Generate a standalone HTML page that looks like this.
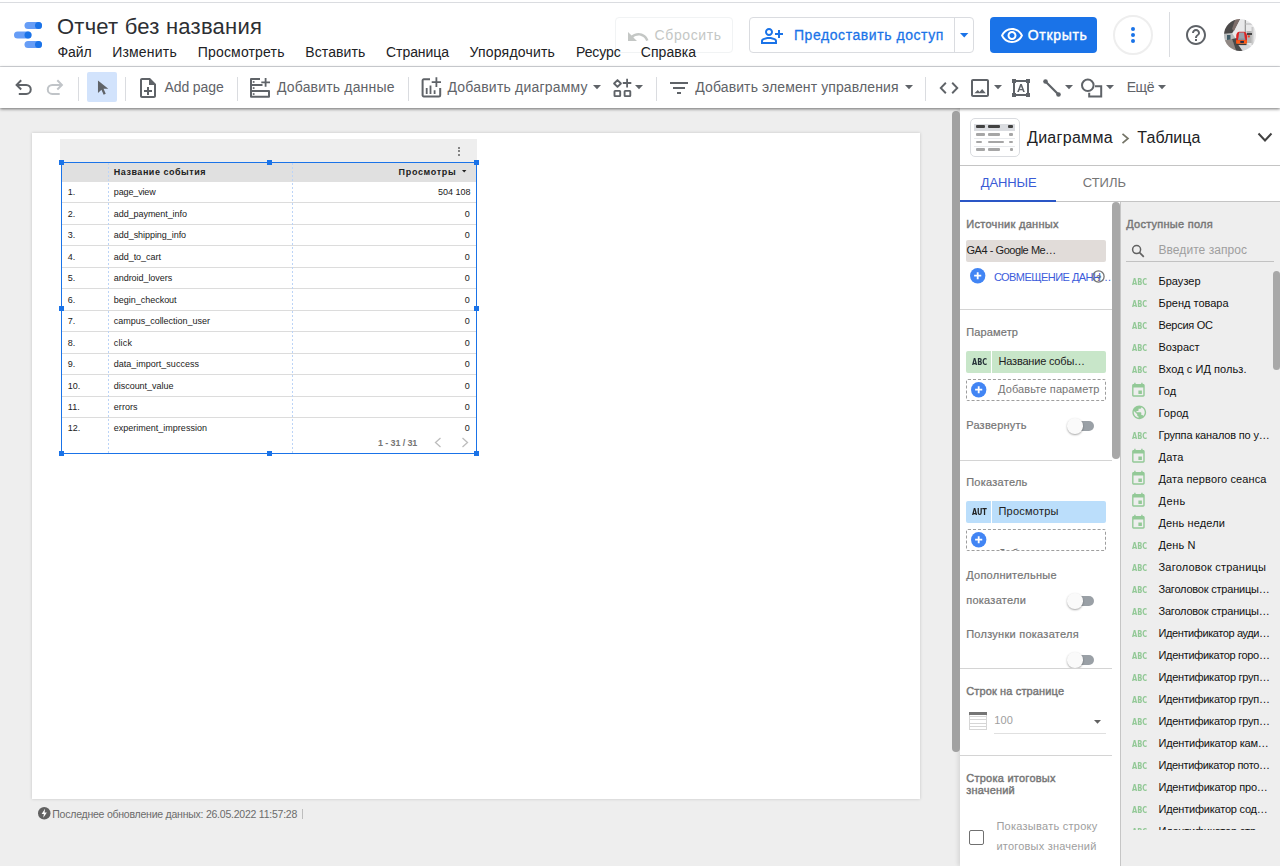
<!DOCTYPE html>
<html lang="ru"><head><meta charset="utf-8"><title>Отчет без названия</title>
<style>
html,body{margin:0;padding:0;}
body{width:1280px;height:866px;position:relative;overflow:hidden;background:#eeeeee;font-family:"Liberation Sans", sans-serif;}
.t{position:absolute;white-space:nowrap;display:block;}
.b{position:absolute;box-sizing:border-box;}
svg{position:absolute;overflow:visible;}
</style></head><body>
<div class="b" style="left:32px;top:133px;width:887.5px;height:665.5px;background:#fff;box-shadow:0 0 3px rgba(0,0,0,.18);"></div>
<div class="b" style="left:60px;top:139px;width:416.5px;height:23px;background:#eeeeee;"></div>
<div class="b" style="left:457.8px;top:146.5px;width:2px;height:2px;background:#616161;border-radius:50%;"></div>
<div class="b" style="left:457.8px;top:150px;width:2px;height:2px;background:#616161;border-radius:50%;"></div>
<div class="b" style="left:457.8px;top:153.5px;width:2px;height:2px;background:#616161;border-radius:50%;"></div>
<div class="b" style="left:61px;top:162px;width:416px;height:20px;background:#e0e0e0;"></div>
<span id="t0" class="t" style="left:113.80px;top:168.00px;font-size:9px;line-height:9px;color:#212121;font-weight:700;letter-spacing:0.516px;">Название события</span>
<span id="t1" class="t" style="left:398.60px;top:168.00px;font-size:9px;line-height:9px;color:#212121;font-weight:700;letter-spacing:0.659px;">Просмотры</span>
<svg style="left:462px;top:170.400px" width="4.400" height="2.400" viewBox="0 0 4.400 2.400"><path fill="#212121" d="M0 0h4.400L2.200 2.400z"/></svg>
<span id="t2" class="t" style="left:67.80px;top:188.00px;font-size:9px;line-height:9px;color:#212121;">1.</span>
<span id="t3" class="t" style="left:113.80px;top:188.00px;font-size:9px;line-height:9px;color:#212121;letter-spacing:-0.137px;">page_view</span>
<span id="t4" class="t" style="left:438.00px;top:188.00px;font-size:9px;line-height:9px;color:#212121;letter-spacing:0.008px;">504 108</span>
<div class="b" style="left:61px;top:202.3px;width:416px;height:1px;background:#dcdcdc;"></div>
<span id="t5" class="t" style="left:67.80px;top:210.00px;font-size:9px;line-height:9px;color:#212121;">2.</span>
<span id="t6" class="t" style="left:113.80px;top:210.00px;font-size:9px;line-height:9px;color:#212121;letter-spacing:-0.060px;">add_payment_info</span>
<span id="t7" class="t" style="left:464.80px;top:210.00px;font-size:9px;line-height:9px;color:#212121;letter-spacing:0.784px;">0</span>
<div class="b" style="left:61px;top:223.77px;width:416px;height:1px;background:#dcdcdc;"></div>
<span id="t8" class="t" style="left:67.80px;top:231.00px;font-size:9px;line-height:9px;color:#212121;">3.</span>
<span id="t9" class="t" style="left:113.80px;top:231.00px;font-size:9px;line-height:9px;color:#212121;letter-spacing:-0.046px;">add_shipping_info</span>
<span id="t10" class="t" style="left:464.80px;top:231.00px;font-size:9px;line-height:9px;color:#212121;letter-spacing:0.784px;">0</span>
<div class="b" style="left:61px;top:245.24px;width:416px;height:1px;background:#dcdcdc;"></div>
<span id="t11" class="t" style="left:67.80px;top:253.00px;font-size:9px;line-height:9px;color:#212121;">4.</span>
<span id="t12" class="t" style="left:113.80px;top:253.00px;font-size:9px;line-height:9px;color:#212121;letter-spacing:-0.041px;">add_to_cart</span>
<span id="t13" class="t" style="left:464.80px;top:253.00px;font-size:9px;line-height:9px;color:#212121;letter-spacing:0.784px;">0</span>
<div class="b" style="left:61px;top:266.71px;width:416px;height:1px;background:#dcdcdc;"></div>
<span id="t14" class="t" style="left:67.80px;top:274.00px;font-size:9px;line-height:9px;color:#212121;">5.</span>
<span id="t15" class="t" style="left:113.80px;top:274.00px;font-size:9px;line-height:9px;color:#212121;letter-spacing:-0.053px;">android_lovers</span>
<span id="t16" class="t" style="left:464.80px;top:274.00px;font-size:9px;line-height:9px;color:#212121;letter-spacing:0.784px;">0</span>
<div class="b" style="left:61px;top:288.18px;width:416px;height:1px;background:#dcdcdc;"></div>
<span id="t17" class="t" style="left:67.80px;top:296.00px;font-size:9px;line-height:9px;color:#212121;">6.</span>
<span id="t18" class="t" style="left:113.80px;top:296.00px;font-size:9px;line-height:9px;color:#212121;letter-spacing:-0.019px;">begin_checkout</span>
<span id="t19" class="t" style="left:464.80px;top:296.00px;font-size:9px;line-height:9px;color:#212121;letter-spacing:0.784px;">0</span>
<div class="b" style="left:61px;top:309.65px;width:416px;height:1px;background:#dcdcdc;"></div>
<span id="t20" class="t" style="left:67.80px;top:317.00px;font-size:9px;line-height:9px;color:#212121;">7.</span>
<span id="t21" class="t" style="left:113.80px;top:317.00px;font-size:9px;line-height:9px;color:#212121;letter-spacing:-0.021px;">campus_collection_user</span>
<span id="t22" class="t" style="left:464.80px;top:317.00px;font-size:9px;line-height:9px;color:#212121;letter-spacing:0.784px;">0</span>
<div class="b" style="left:61px;top:331.12px;width:416px;height:1px;background:#dcdcdc;"></div>
<span id="t23" class="t" style="left:67.80px;top:339.00px;font-size:9px;line-height:9px;color:#212121;">8.</span>
<span id="t24" class="t" style="left:113.80px;top:339.00px;font-size:9px;line-height:9px;color:#212121;letter-spacing:0.160px;">click</span>
<span id="t25" class="t" style="left:464.80px;top:339.00px;font-size:9px;line-height:9px;color:#212121;letter-spacing:0.784px;">0</span>
<div class="b" style="left:61px;top:352.59px;width:416px;height:1px;background:#dcdcdc;"></div>
<span id="t26" class="t" style="left:67.80px;top:360.00px;font-size:9px;line-height:9px;color:#212121;">9.</span>
<span id="t27" class="t" style="left:113.80px;top:360.00px;font-size:9px;line-height:9px;color:#212121;letter-spacing:0.003px;">data_import_success</span>
<span id="t28" class="t" style="left:464.80px;top:360.00px;font-size:9px;line-height:9px;color:#212121;letter-spacing:0.784px;">0</span>
<div class="b" style="left:61px;top:374.06px;width:416px;height:1px;background:#dcdcdc;"></div>
<span id="t29" class="t" style="left:67.80px;top:382.00px;font-size:9px;line-height:9px;color:#212121;">10.</span>
<span id="t30" class="t" style="left:113.80px;top:382.00px;font-size:9px;line-height:9px;color:#212121;letter-spacing:-0.032px;">discount_value</span>
<span id="t31" class="t" style="left:464.80px;top:382.00px;font-size:9px;line-height:9px;color:#212121;letter-spacing:0.784px;">0</span>
<div class="b" style="left:61px;top:395.53px;width:416px;height:1px;background:#dcdcdc;"></div>
<span id="t32" class="t" style="left:67.80px;top:403.00px;font-size:9px;line-height:9px;color:#212121;">11.</span>
<span id="t33" class="t" style="left:113.80px;top:403.00px;font-size:9px;line-height:9px;color:#212121;letter-spacing:0.047px;">errors</span>
<span id="t34" class="t" style="left:464.80px;top:403.00px;font-size:9px;line-height:9px;color:#212121;letter-spacing:0.784px;">0</span>
<div class="b" style="left:61px;top:417.0px;width:416px;height:1px;background:#dcdcdc;"></div>
<span id="t35" class="t" style="left:67.80px;top:424.00px;font-size:9px;line-height:9px;color:#212121;">12.</span>
<span id="t36" class="t" style="left:113.80px;top:424.00px;font-size:9px;line-height:9px;color:#212121;letter-spacing:0.003px;">experiment_impression</span>
<span id="t37" class="t" style="left:464.80px;top:424.00px;font-size:9px;line-height:9px;color:#212121;letter-spacing:0.784px;">0</span>
<span id="t38" class="t" style="left:378.00px;top:439.00px;font-size:9px;line-height:9px;color:#757575;font-weight:700;letter-spacing:-0.121px;">1 - 31 / 31</span>
<svg style="left:434px;top:437px" width="8" height="11" viewBox="0 0 8 11"><path d="M6.500 1L1.500 5.500l5 4.500" fill="none" stroke="#bdbdbd" stroke-width="1.300"/></svg>
<svg style="left:460.500px;top:437px" width="8" height="11" viewBox="0 0 8 11"><path d="M1.500 1l5 4.500-5 4.500" fill="none" stroke="#bdbdbd" stroke-width="1.300"/></svg>
<div class="b" style="left:107.6px;top:163px;width:1px;height:290px;background:repeating-linear-gradient(#bcd4f7 0,#bcd4f7 2px,transparent 2px,transparent 4px);"></div>
<div class="b" style="left:291.6px;top:163px;width:1px;height:290px;background:repeating-linear-gradient(#bcd4f7 0,#bcd4f7 2px,transparent 2px,transparent 4px);"></div>
<div class="b" style="left:61px;top:162px;width:416px;height:292px;border:1px solid #1a73e8;"></div>
<div class="b" style="left:58.8px;top:160.2px;width:5.2px;height:5.2px;background:#1a73e8;"></div>
<div class="b" style="left:58.8px;top:306.2px;width:5.2px;height:5.2px;background:#1a73e8;"></div>
<div class="b" style="left:58.8px;top:450.9px;width:5.2px;height:5.2px;background:#1a73e8;"></div>
<div class="b" style="left:266.8px;top:160.2px;width:5.2px;height:5.2px;background:#1a73e8;"></div>
<div class="b" style="left:266.8px;top:450.9px;width:5.2px;height:5.2px;background:#1a73e8;"></div>
<div class="b" style="left:474.3px;top:160.2px;width:5.2px;height:5.2px;background:#1a73e8;"></div>
<div class="b" style="left:474.3px;top:306.2px;width:5.2px;height:5.2px;background:#1a73e8;"></div>
<div class="b" style="left:474.3px;top:450.9px;width:5.2px;height:5.2px;background:#1a73e8;"></div>
<svg style="left:37.500px;top:806.800px" width="12.500" height="12.500" viewBox="0 0 24 24"><circle cx="12" cy="12" r="12" fill="#616161"/><path fill="#fff" d="M13.500 3.500L7 13.500h4.200l-1 7 6.800-10h-4.300z"/></svg>
<span id="t39" class="t" style="left:52.30px;top:809.00px;font-size:10.5px;line-height:10.5px;color:#6b6b6b;letter-spacing:-0.231px;">Последнее обновление данных: 26.05.2022 11:57:28</span>
<div class="b" style="left:302px;top:808.5px;width:1px;height:10.5px;background:#bdbdbd;"></div>
<div class="b" style="left:960px;top:108px;width:320px;height:758px;background:#fff;box-shadow:-2px 0 4px rgba(0,0,0,.10);"></div>
<div class="b" style="left:952px;top:111px;width:7.6px;height:641px;background:#a1a1a1;border-radius:4px;"></div>
<div class="b" style="left:970px;top:118px;width:50px;height:39px;border:1px solid #dadce0;border-radius:5px;background:#fff;"></div>
<div class="b" style="left:974px;top:123.5px;width:41px;height:7px;background:#dadce0;"></div>
<div class="b" style="left:976px;top:125.3px;width:9px;height:3px;background:#424242;border-radius:1px;"></div>
<div class="b" style="left:988px;top:125.3px;width:12px;height:3px;background:#424242;border-radius:1px;"></div>
<div class="b" style="left:1008px;top:125.3px;width:5px;height:3px;background:#424242;border-radius:1px;"></div>
<div class="b" style="left:976px;top:133px;width:9px;height:2.6px;background:#a6a6a6;border-radius:1px;"></div>
<div class="b" style="left:988px;top:133px;width:12px;height:2.6px;background:#a6a6a6;border-radius:1px;"></div>
<div class="b" style="left:1009px;top:133px;width:4px;height:2.6px;background:#a6a6a6;border-radius:1px;"></div>
<div class="b" style="left:976px;top:140.7px;width:6px;height:2.6px;background:#a6a6a6;border-radius:1px;"></div>
<div class="b" style="left:988px;top:140.7px;width:16px;height:2.6px;background:#a6a6a6;border-radius:1px;"></div>
<div class="b" style="left:1009px;top:140.7px;width:4px;height:2.6px;background:#a6a6a6;border-radius:1px;"></div>
<div class="b" style="left:976px;top:148.3px;width:9px;height:2.6px;background:#a6a6a6;border-radius:1px;"></div>
<div class="b" style="left:988px;top:148.3px;width:12px;height:2.6px;background:#a6a6a6;border-radius:1px;"></div>
<div class="b" style="left:1010px;top:148.3px;width:3px;height:2.6px;background:#a6a6a6;border-radius:1px;"></div>
<div class="b" style="left:974px;top:138px;width:41px;height:1px;background:#e8eaed;"></div>
<div class="b" style="left:974px;top:146px;width:41px;height:1px;background:#e8eaed;"></div>
<span id="t40" class="t" style="left:1027.00px;top:130.00px;font-size:16px;line-height:16px;color:#202124;letter-spacing:0.300px;">Диаграмма</span>
<svg style="left:1121px;top:132.500px" width="9" height="11" viewBox="0 0 9 11"><path d="M1.500 0.800L7 5.500l-5.500 4.700" fill="none" stroke="#757568" stroke-width="1.700"/></svg>
<span id="t41" class="t" style="left:1137.30px;top:130.00px;font-size:16px;line-height:16px;color:#202124;letter-spacing:0.067px;">Таблица</span>
<svg style="left:1257px;top:131.500px" width="16" height="11" viewBox="0 0 16 11"><path d="M1.500 1.500L8 8.500l6.500-7" fill="none" stroke="#424242" stroke-width="2"/></svg>
<div class="b" style="left:960px;top:165px;width:320px;height:1px;background:#c4c4c4;"></div>
<span id="t42" class="t" style="left:980.80px;top:176.00px;font-size:13px;line-height:13px;color:#3a5bd6;letter-spacing:-0.106px;">ДАННЫЕ</span>
<span id="t43" class="t" style="left:1082.80px;top:176.00px;font-size:13px;line-height:13px;color:#757575;letter-spacing:-0.042px;">СТИЛЬ</span>
<div class="b" style="left:960px;top:201px;width:320px;height:1px;background:#c4c4c4;"></div>
<div class="b" style="left:960px;top:200px;width:96px;height:2px;background:#2a56c6;"></div>
<span id="t44" class="t" style="left:966.20px;top:219.00px;font-size:11px;line-height:11px;color:#757575;-webkit-text-stroke:0.400px #757575;letter-spacing:0.306px;">Источник данных</span>
<div class="b" style="left:966px;top:240px;width:140px;height:21.6px;background:#e1dcd9;border-radius:2px;"></div>
<span id="t45" class="t" style="left:966.50px;top:245.00px;font-size:11px;line-height:11px;color:#212121;letter-spacing:-0.456px;">GA4 - Google Me…</span>
<svg style="left:969.9px;top:268.3px" width="15.4" height="15.4" viewBox="0 0 16 16"><circle cx="8" cy="8" r="8" fill="#4285f4"/><path d="M8 4.300v7.400M4.300 8h7.400" stroke="#fff" stroke-width="1.900"/></svg>
<span id="t46" class="t" style="left:993.90px;top:272.00px;font-size:11px;line-height:11px;color:#3b5bdb;letter-spacing:-0.542px;">СОВМЕЩЕНИЕ ДАНН…</span>
<svg style="left:1091.500px;top:270px" width="13" height="13" viewBox="0 0 13 13"><circle cx="6.500" cy="6.500" r="5.600" fill="none" stroke="#757575" stroke-width="1.300"/></svg>
<span id="t47" class="t" style="left:1096.00px;top:274.00px;font-size:9px;line-height:9px;color:#757575;font-weight:700;">?</span>
<div class="b" style="left:960px;top:309px;width:152px;height:1px;background:#d4d4d4;"></div>
<span id="t48" class="t" style="left:966.20px;top:327.00px;font-size:11px;line-height:11px;color:#757575;-webkit-text-stroke:0.200px #757575;letter-spacing:0.146px;">Параметр</span>
<div class="b" style="left:966px;top:351px;width:140px;height:22px;background:#c8e6c9;border-radius:2px;"></div>
<div class="b" style="left:991px;top:351px;width:1px;height:22px;background:#fff;"></div>
<span class="t" style="left:971.80px;top:357px;font:bold 9.500px/10px &quot;DejaVu Sans Condensed&quot;,&quot;DejaVu Sans&quot;,sans-serif;color:#263238;transform:scaleX(0.78);transform-origin:0 0;">ABC</span>
<span id="t49" class="t" style="left:998.50px;top:356.00px;font-size:11px;line-height:11px;color:#212121;letter-spacing:-0.198px;">Название собы…</span>
<div class="b" style="left:966px;top:379px;width:140px;height:22px;border:1px dashed #9e9e9e;border-radius:2px;"></div>
<svg style="left:971.3px;top:382.3px" width="15.4" height="15.4" viewBox="0 0 16 16"><circle cx="8" cy="8" r="8" fill="#4285f4"/><path d="M8 4.300v7.400M4.300 8h7.400" stroke="#fff" stroke-width="1.900"/></svg>
<span id="t50" class="t" style="left:998.00px;top:384.00px;font-size:11px;line-height:11px;color:#757575;letter-spacing:0.126px;">Добавьте параметр</span>
<span id="t51" class="t" style="left:966.20px;top:420.00px;font-size:11px;line-height:11px;color:#757575;-webkit-text-stroke:0.200px #757575;letter-spacing:0.229px;">Развернуть</span>
<div class="b" style="left:1077.2px;top:421px;width:17px;height:10px;background:#9aa0a6;border-radius:5px;"></div><div class="b" style="left:1067.4px;top:418.2px;width:15.600px;height:15.600px;background:#fafafa;border-radius:50%;box-shadow:0 1px 2px rgba(0,0,0,.35);"></div>
<div class="b" style="left:960px;top:459.5px;width:152px;height:1px;background:#d4d4d4;"></div>
<span id="t52" class="t" style="left:966.20px;top:477.00px;font-size:11px;line-height:11px;color:#757575;-webkit-text-stroke:0.200px #757575;letter-spacing:0.259px;">Показатель</span>
<div class="b" style="left:966px;top:501px;width:140px;height:22px;background:#bbdefb;border-radius:2px;"></div>
<div class="b" style="left:991px;top:501px;width:1px;height:22px;background:#fff;"></div>
<span class="t" style="left:971.80px;top:507px;font:bold 9.500px/10px &quot;DejaVu Sans Condensed&quot;,&quot;DejaVu Sans&quot;,sans-serif;color:#212121;transform:scaleX(0.78);transform-origin:0 0;">AUT</span>
<span id="t53" class="t" style="left:998.50px;top:506.00px;font-size:11px;line-height:11px;color:#212121;letter-spacing:0.216px;">Просмотры</span>
<div class="b" style="left:966px;top:529px;width:140px;height:22px;border:1px dashed #9e9e9e;border-radius:2px;"></div>
<svg style="left:971.3px;top:532.3px" width="15.4" height="15.4" viewBox="0 0 16 16"><circle cx="8" cy="8" r="8" fill="#4285f4"/><path d="M8 4.300v7.400M4.300 8h7.400" stroke="#fff" stroke-width="1.900"/></svg>
<div class="b" style="left:990px;top:540px;width:110px;height:10.400px;overflow:hidden;"><span class="t" style="left:8px;top:8.400px;font-size:11px;line-height:11px;color:#757575;">Добавьте показатель</span></div>
<span id="t54" class="t" style="left:966.20px;top:570.00px;font-size:11px;line-height:11px;color:#757575;-webkit-text-stroke:0.200px #757575;letter-spacing:0.252px;">Дополнительные</span>
<span id="t55" class="t" style="left:966.20px;top:595.00px;font-size:11px;line-height:11px;color:#757575;-webkit-text-stroke:0.200px #757575;letter-spacing:0.262px;">показатели</span>
<div class="b" style="left:1077.2px;top:596px;width:17px;height:10px;background:#9aa0a6;border-radius:5px;"></div><div class="b" style="left:1067.4px;top:593.2px;width:15.600px;height:15.600px;background:#fafafa;border-radius:50%;box-shadow:0 1px 2px rgba(0,0,0,.35);"></div>
<span id="t56" class="t" style="left:966.20px;top:629.00px;font-size:11px;line-height:11px;color:#757575;-webkit-text-stroke:0.200px #757575;letter-spacing:0.258px;">Ползунки показателя</span>
<div class="b" style="left:1060px;top:645px;width:50px;height:23px;overflow:hidden;"><div class="b" style="left:17.2px;top:10.2px;width:17px;height:10px;background:#9aa0a6;border-radius:5px;"></div><div class="b" style="left:7.3999999999999995px;top:7.3999999999999995px;width:15.600px;height:15.600px;background:#fafafa;border-radius:50%;box-shadow:0 1px 2px rgba(0,0,0,.35);"></div></div>
<div class="b" style="left:960px;top:668px;width:152px;height:1px;background:#d4d4d4;"></div>
<span id="t57" class="t" style="left:966.20px;top:686.00px;font-size:11px;line-height:11px;color:#757575;-webkit-text-stroke:0.400px #757575;letter-spacing:0.140px;">Строк на странице</span>
<div class="b" style="left:969px;top:712px;width:18px;height:18px;border:1px solid #d6d6d6;border-top:none;background:repeating-linear-gradient(#fff 0,#fff 2.200px,#d6d6d6 2.200px,#d6d6d6 3.200px);background-position:0 2px;"></div>
<div class="b" style="left:969px;top:712px;width:18px;height:2.7px;background:#757575;"></div>
<span id="t58" class="t" style="left:994.30px;top:715.00px;font-size:11px;line-height:11px;color:#9e9e9e;letter-spacing:0.047px;">100</span>
<svg style="left:1093.5px;top:719.5px" width="7" height="3.7" viewBox="0 0 7 3.7"><path fill="#616161" d="M0 0h7L3.5 3.7z"/></svg>
<div class="b" style="left:994px;top:733px;width:112px;height:1px;background:#e0e0e0;"></div>
<div class="b" style="left:960px;top:755px;width:152px;height:1px;background:#d4d4d4;"></div>
<span id="t59" class="t" style="left:966.20px;top:773.00px;font-size:11px;line-height:11px;color:#757575;-webkit-text-stroke:0.400px #757575;letter-spacing:0.256px;">Строка итоговых</span>
<span id="t60" class="t" style="left:966.20px;top:785.00px;font-size:11px;line-height:11px;color:#757575;-webkit-text-stroke:0.400px #757575;letter-spacing:0.185px;">значений</span>
<div class="b" style="left:968.7px;top:830px;width:15px;height:15px;border:1.800px solid #707070;border-radius:2px;"></div>
<span id="t61" class="t" style="left:996.40px;top:821.00px;font-size:11px;line-height:11px;color:#9e9e9e;letter-spacing:0.267px;">Показывать строку</span>
<span id="t62" class="t" style="left:996.40px;top:841.00px;font-size:11px;line-height:11px;color:#9e9e9e;letter-spacing:0.213px;">итоговых значений</span>
<div class="b" style="left:1112px;top:202px;width:8px;height:257px;background:#a8a8a8;border-radius:4px;"></div>
<div class="b" style="left:1119.5px;top:202px;width:160.5px;height:664px;background:#eeeeee;border-left:1px solid #c6c6c6;"></div>
<span id="t63" class="t" style="left:1126.20px;top:219.00px;font-size:11px;line-height:11px;color:#757575;-webkit-text-stroke:0.400px #757575;letter-spacing:0.252px;">Доступные поля</span>
<svg style="left:1131px;top:243.500px" width="14" height="14" viewBox="0 0 14 14"><circle cx="5.600" cy="5.600" r="4" fill="none" stroke="#616161" stroke-width="1.500"/><path d="M8.600 8.600l4.200 4.200" stroke="#616161" stroke-width="1.700"/></svg>
<span id="t64" class="t" style="left:1158.50px;top:244.00px;font-size:12px;line-height:12px;color:#9e9e9e;letter-spacing:0.061px;">Введите запрос</span>
<div class="b" style="left:1126px;top:261px;width:148px;height:1px;background:#c2c2c2;"></div>
<div class="b" style="left:1272.7px;top:271px;width:7.3px;height:99px;background:#a8a8a8;border-radius:4px;"></div>
<div class="b" style="left:0;top:0;width:1280px;height:830px;overflow:hidden;"><span class="t" style="left:1131.90px;top:277px;font:bold 9.500px/10px &quot;DejaVu Sans Condensed&quot;,&quot;DejaVu Sans&quot;,sans-serif;color:#93c997;transform:scaleX(0.78);transform-origin:0 0;">ABC</span>
<span id="t65" class="t" style="left:1158.50px;top:276.00px;font-size:11px;line-height:11px;color:#111;letter-spacing:0.014px;">Браузер</span>
<span class="t" style="left:1131.90px;top:299px;font:bold 9.500px/10px &quot;DejaVu Sans Condensed&quot;,&quot;DejaVu Sans&quot;,sans-serif;color:#93c997;transform:scaleX(0.78);transform-origin:0 0;">ABC</span>
<span id="t66" class="t" style="left:1158.50px;top:298.00px;font-size:11px;line-height:11px;color:#111;letter-spacing:-0.001px;">Бренд товара</span>
<span class="t" style="left:1131.90px;top:321px;font:bold 9.500px/10px &quot;DejaVu Sans Condensed&quot;,&quot;DejaVu Sans&quot;,sans-serif;color:#93c997;transform:scaleX(0.78);transform-origin:0 0;">ABC</span>
<span id="t67" class="t" style="left:1158.50px;top:320.00px;font-size:11px;line-height:11px;color:#111;letter-spacing:-0.293px;">Версия ОС</span>
<span class="t" style="left:1131.90px;top:343px;font:bold 9.500px/10px &quot;DejaVu Sans Condensed&quot;,&quot;DejaVu Sans&quot;,sans-serif;color:#93c997;transform:scaleX(0.78);transform-origin:0 0;">ABC</span>
<span id="t68" class="t" style="left:1158.50px;top:342.00px;font-size:11px;line-height:11px;color:#111;letter-spacing:-0.008px;">Возраст</span>
<span class="t" style="left:1131.90px;top:365px;font:bold 9.500px/10px &quot;DejaVu Sans Condensed&quot;,&quot;DejaVu Sans&quot;,sans-serif;color:#93c997;transform:scaleX(0.78);transform-origin:0 0;">ABC</span>
<span id="t69" class="t" style="left:1158.50px;top:364.00px;font-size:11px;line-height:11px;color:#111;letter-spacing:0.069px;">Вход с ИД польз.</span>
<svg style="left:1130.400px;top:382.3px" width="16.800" height="16.800" viewBox="0 0 24 24"><path fill="#93c997" d="M17 12h-5v5h5v-5zM16 1v2H8V1H6v2H5c-1.110 0-1.990.9-1.990 2L3 19c0 1.100.89 2 2 2h14c1.100 0 2-.9 2-2V5c0-1.100-.9-2-2-2h-1V1h-2zm3 18H5V8h14v11z"/></svg>
<span id="t70" class="t" style="left:1158.50px;top:386.00px;font-size:11px;line-height:11px;color:#111;letter-spacing:0.028px;">Год</span>
<svg style="left:1130.500px;top:404.3px" width="16.500" height="16.500" viewBox="0 0 24 24"><path fill="#93c997" d="M12 2C6.480 2 2 6.480 2 12s4.480 10 10 10 10-4.480 10-10S17.520 2 12 2zm-1 17.930c-3.950-.49-7-3.850-7-7.930 0-.62.080-1.210.21-1.790L9 15v1c0 1.100.9 2 2 2v1.930zm6.900-2.540c-.26-.81-1-1.390-1.900-1.390h-1v-3c0-.55-.45-1-1-1H8v-2h2c.55 0 1-.45 1-1V7h2c1.100 0 2-.9 2-2v-.41c2.930 1.190 5 4.060 5 7.410 0 2.080-.8 3.970-2.100 5.390z"/></svg>
<span id="t71" class="t" style="left:1158.50px;top:408.00px;font-size:11px;line-height:11px;color:#111;letter-spacing:0.067px;">Город</span>
<span class="t" style="left:1131.90px;top:431px;font:bold 9.500px/10px &quot;DejaVu Sans Condensed&quot;,&quot;DejaVu Sans&quot;,sans-serif;color:#93c997;transform:scaleX(0.78);transform-origin:0 0;">ABC</span>
<span id="t72" class="t" style="left:1158.50px;top:430.00px;font-size:11px;line-height:11px;color:#111;letter-spacing:-0.169px;">Группа каналов по у…</span>
<svg style="left:1130.400px;top:448.3px" width="16.800" height="16.800" viewBox="0 0 24 24"><path fill="#93c997" d="M17 12h-5v5h5v-5zM16 1v2H8V1H6v2H5c-1.110 0-1.990.9-1.990 2L3 19c0 1.100.89 2 2 2h14c1.100 0 2-.9 2-2V5c0-1.100-.9-2-2-2h-1V1h-2zm3 18H5V8h14v11z"/></svg>
<span id="t73" class="t" style="left:1158.50px;top:452.00px;font-size:11px;line-height:11px;color:#111;letter-spacing:0.185px;">Дата</span>
<svg style="left:1130.400px;top:470.3px" width="16.800" height="16.800" viewBox="0 0 24 24"><path fill="#93c997" d="M17 12h-5v5h5v-5zM16 1v2H8V1H6v2H5c-1.110 0-1.990.9-1.990 2L3 19c0 1.100.89 2 2 2h14c1.100 0 2-.9 2-2V5c0-1.100-.9-2-2-2h-1V1h-2zm3 18H5V8h14v11z"/></svg>
<span id="t74" class="t" style="left:1158.50px;top:474.00px;font-size:11px;line-height:11px;color:#111;letter-spacing:0.120px;">Дата первого сеанса</span>
<svg style="left:1130.400px;top:492.3px" width="16.800" height="16.800" viewBox="0 0 24 24"><path fill="#93c997" d="M17 12h-5v5h5v-5zM16 1v2H8V1H6v2H5c-1.110 0-1.990.9-1.990 2L3 19c0 1.100.89 2 2 2h14c1.100 0 2-.9 2-2V5c0-1.100-.9-2-2-2h-1V1h-2zm3 18H5V8h14v11z"/></svg>
<span id="t75" class="t" style="left:1158.50px;top:496.00px;font-size:11px;line-height:11px;color:#111;letter-spacing:0.431px;">День</span>
<svg style="left:1130.400px;top:514.3px" width="16.800" height="16.800" viewBox="0 0 24 24"><path fill="#93c997" d="M17 12h-5v5h5v-5zM16 1v2H8V1H6v2H5c-1.110 0-1.990.9-1.990 2L3 19c0 1.100.89 2 2 2h14c1.100 0 2-.9 2-2V5c0-1.100-.9-2-2-2h-1V1h-2zm3 18H5V8h14v11z"/></svg>
<span id="t76" class="t" style="left:1158.50px;top:518.00px;font-size:11px;line-height:11px;color:#111;letter-spacing:0.134px;">День недели</span>
<span class="t" style="left:1131.90px;top:541px;font:bold 9.500px/10px &quot;DejaVu Sans Condensed&quot;,&quot;DejaVu Sans&quot;,sans-serif;color:#93c997;transform:scaleX(0.78);transform-origin:0 0;">ABC</span>
<span id="t77" class="t" style="left:1158.50px;top:540.00px;font-size:11px;line-height:11px;color:#111;letter-spacing:0.121px;">День N</span>
<span class="t" style="left:1131.90px;top:563px;font:bold 9.500px/10px &quot;DejaVu Sans Condensed&quot;,&quot;DejaVu Sans&quot;,sans-serif;color:#93c997;transform:scaleX(0.78);transform-origin:0 0;">ABC</span>
<span id="t78" class="t" style="left:1158.50px;top:562.00px;font-size:11px;line-height:11px;color:#111;letter-spacing:0.201px;">Заголовок страницы</span>
<span class="t" style="left:1131.90px;top:585px;font:bold 9.500px/10px &quot;DejaVu Sans Condensed&quot;,&quot;DejaVu Sans&quot;,sans-serif;color:#93c997;transform:scaleX(0.78);transform-origin:0 0;">ABC</span>
<span id="t79" class="t" style="left:1158.50px;top:584.00px;font-size:11px;line-height:11px;color:#111;letter-spacing:-0.204px;">Заголовок страницы…</span>
<span class="t" style="left:1131.90px;top:607px;font:bold 9.500px/10px &quot;DejaVu Sans Condensed&quot;,&quot;DejaVu Sans&quot;,sans-serif;color:#93c997;transform:scaleX(0.78);transform-origin:0 0;">ABC</span>
<span id="t80" class="t" style="left:1158.50px;top:606.00px;font-size:11px;line-height:11px;color:#111;letter-spacing:-0.204px;">Заголовок страницы…</span>
<span class="t" style="left:1131.90px;top:629px;font:bold 9.500px/10px &quot;DejaVu Sans Condensed&quot;,&quot;DejaVu Sans&quot;,sans-serif;color:#93c997;transform:scaleX(0.78);transform-origin:0 0;">ABC</span>
<span id="t81" class="t" style="left:1158.50px;top:628.00px;font-size:11px;line-height:11px;color:#111;letter-spacing:-0.402px;">Идентификатор ауди…</span>
<span class="t" style="left:1131.90px;top:651px;font:bold 9.500px/10px &quot;DejaVu Sans Condensed&quot;,&quot;DejaVu Sans&quot;,sans-serif;color:#93c997;transform:scaleX(0.78);transform-origin:0 0;">ABC</span>
<span id="t82" class="t" style="left:1158.50px;top:650.00px;font-size:11px;line-height:11px;color:#111;letter-spacing:-0.319px;">Идентификатор горо…</span>
<span class="t" style="left:1131.90px;top:673px;font:bold 9.500px/10px &quot;DejaVu Sans Condensed&quot;,&quot;DejaVu Sans&quot;,sans-serif;color:#93c997;transform:scaleX(0.78);transform-origin:0 0;">ABC</span>
<span id="t83" class="t" style="left:1158.50px;top:672.00px;font-size:11px;line-height:11px;color:#111;letter-spacing:-0.284px;">Идентификатор груп…</span>
<span class="t" style="left:1131.90px;top:695px;font:bold 9.500px/10px &quot;DejaVu Sans Condensed&quot;,&quot;DejaVu Sans&quot;,sans-serif;color:#93c997;transform:scaleX(0.78);transform-origin:0 0;">ABC</span>
<span id="t84" class="t" style="left:1158.50px;top:694.00px;font-size:11px;line-height:11px;color:#111;letter-spacing:-0.284px;">Идентификатор груп…</span>
<span class="t" style="left:1131.90px;top:717px;font:bold 9.500px/10px &quot;DejaVu Sans Condensed&quot;,&quot;DejaVu Sans&quot;,sans-serif;color:#93c997;transform:scaleX(0.78);transform-origin:0 0;">ABC</span>
<span id="t85" class="t" style="left:1158.50px;top:716.00px;font-size:11px;line-height:11px;color:#111;letter-spacing:-0.284px;">Идентификатор груп…</span>
<span class="t" style="left:1131.90px;top:739px;font:bold 9.500px/10px &quot;DejaVu Sans Condensed&quot;,&quot;DejaVu Sans&quot;,sans-serif;color:#93c997;transform:scaleX(0.78);transform-origin:0 0;">ABC</span>
<span id="t86" class="t" style="left:1158.50px;top:738.00px;font-size:11px;line-height:11px;color:#111;letter-spacing:-0.204px;">Идентификатор кам…</span>
<span class="t" style="left:1131.90px;top:761px;font:bold 9.500px/10px &quot;DejaVu Sans Condensed&quot;,&quot;DejaVu Sans&quot;,sans-serif;color:#93c997;transform:scaleX(0.78);transform-origin:0 0;">ABC</span>
<span id="t87" class="t" style="left:1158.50px;top:760.00px;font-size:11px;line-height:11px;color:#111;letter-spacing:-0.358px;">Идентификатор пото…</span>
<span class="t" style="left:1131.90px;top:783px;font:bold 9.500px/10px &quot;DejaVu Sans Condensed&quot;,&quot;DejaVu Sans&quot;,sans-serif;color:#93c997;transform:scaleX(0.78);transform-origin:0 0;">ABC</span>
<span id="t88" class="t" style="left:1158.50px;top:782.00px;font-size:11px;line-height:11px;color:#111;letter-spacing:-0.230px;">Идентификатор про…</span>
<span class="t" style="left:1131.90px;top:805px;font:bold 9.500px/10px &quot;DejaVu Sans Condensed&quot;,&quot;DejaVu Sans&quot;,sans-serif;color:#93c997;transform:scaleX(0.78);transform-origin:0 0;">ABC</span>
<span id="t89" class="t" style="left:1158.50px;top:804.00px;font-size:11px;line-height:11px;color:#111;letter-spacing:-0.214px;">Идентификатор сод…</span>
<span class="t" style="left:1131.90px;top:827px;font:bold 9.500px/10px &quot;DejaVu Sans Condensed&quot;,&quot;DejaVu Sans&quot;,sans-serif;color:#93c997;transform:scaleX(0.78);transform-origin:0 0;">ABC</span>
<span id="t90" class="t" style="left:1158.50px;top:826.00px;font-size:11px;line-height:11px;color:#111;letter-spacing:-0.199px;">Идентификатор стр…</span></div>
<div class="b" style="left:0px;top:0px;width:1280px;height:67px;background:#fff;"></div>
<div class="b" style="left:0px;top:2px;width:1280px;height:1px;background:#dadce0;"></div>
<div class="b" style="left:0px;top:66px;width:1280px;height:1px;background:#dadce0;"></div>
<svg style="left:12px;top:20px" width="32" height="30" viewBox="0 0 32 30">
<rect x="12.5" y="2" width="17.5" height="7" rx="3.5" fill="#669df6"/><circle cx="26.5" cy="5.5" r="3.5" fill="#1a73e8"/>
<rect x="2" y="11.5" width="17.5" height="7" rx="3.5" fill="#669df6"/><circle cx="16" cy="15" r="3.5" fill="#1a73e8"/>
<rect x="12.5" y="21" width="17.5" height="7" rx="3.5" fill="#669df6"/><circle cx="26.5" cy="24.5" r="3.5" fill="#1a73e8"/>
</svg>
<span id="t91" class="t" style="left:57.00px;top:16.00px;font-size:22px;line-height:22px;color:#2d2f33;letter-spacing:0.233px;">Отчет без названия</span>
<div class="b" style="left:615px;top:17px;width:118px;height:36px;border:1px solid #f1f3f4;border-radius:4px;background:#fff;"></div>
<svg style="left:626px;top:25px" width="24" height="24" viewBox="0 0 24 24"><path fill="#c4c7c5" d="M12.5 8c-2.65 0-5.05.99-6.9 2.6L2 7v9h9l-3.62-3.62c1.39-1.16 3.16-1.88 5.12-1.88 3.54 0 6.55 2.31 7.6 5.5l2.37-.78C21.08 11.03 17.15 8 12.5 8z"/></svg>
<span id="t92" class="t" style="left:654.60px;top:28.00px;font-size:14px;line-height:14px;color:#c4c7c5;letter-spacing:0.596px;">Сбросить</span>
<span id="t93" class="t" style="left:640.80px;top:45.00px;font-size:14px;line-height:14px;color:#202124;letter-spacing:0.040px;">Справка</span>
<span id="t94" class="t" style="left:57.40px;top:45.00px;font-size:14px;line-height:14px;color:#202124;letter-spacing:-0.055px;">Файл</span>
<span id="t95" class="t" style="left:112.20px;top:45.00px;font-size:14px;line-height:14px;color:#202124;letter-spacing:0.193px;">Изменить</span>
<span id="t96" class="t" style="left:197.80px;top:45.00px;font-size:14px;line-height:14px;color:#202124;letter-spacing:0.166px;">Просмотреть</span>
<span id="t97" class="t" style="left:305.30px;top:45.00px;font-size:14px;line-height:14px;color:#202124;letter-spacing:0.082px;">Вставить</span>
<span id="t98" class="t" style="left:386.00px;top:45.00px;font-size:14px;line-height:14px;color:#202124;letter-spacing:-0.057px;">Страница</span>
<span id="t99" class="t" style="left:469.60px;top:45.00px;font-size:14px;line-height:14px;color:#202124;letter-spacing:0.190px;">Упорядочить</span>
<span id="t100" class="t" style="left:576.00px;top:45.00px;font-size:14px;line-height:14px;color:#202124;letter-spacing:-0.090px;">Ресурс</span>
<div class="b" style="left:749px;top:17px;width:225px;height:36px;border:1px solid #dadce0;border-radius:4px;background:#fff;"></div>
<div class="b" style="left:954px;top:18px;width:1px;height:34px;background:#dadce0;"></div>
<svg style="left:760px;top:24px" width="24" height="24" viewBox="0 0 24 24"><path fill="#1a73e8" d="M20 9V6h-2v3h-3v2h3v3h2v-3h3V9h-3zM9 12c2.21 0 4-1.79 4-4s-1.790-4-4-4-4 1.790-4 4 1.790 4 4 4zm0-6c1.100 0 2 .9 2 2s-.9 2-2 2-2-.9-2-2 .9-2 2-2zm6.390 8.560C13.710 13.700 11.530 13 9 13c-2.530 0-4.710.7-6.390 1.560C1.610 15.070 1 16.100 1 17.220V20h16v-2.780c0-1.120-.61-2.150-1.610-2.660zM15 18H3v-.78c0-.38.2-.72.52-.88C4.710 15.730 6.630 15 9 15c2.370 0 4.290.73 5.480 1.340.32.160.52.500.52.880V18z"/></svg>
<span id="t101" class="t" style="left:794.00px;top:28.00px;font-size:14px;line-height:14px;color:#1a73e8;-webkit-text-stroke:0.400px #1a73e8;letter-spacing:0.558px;-webkit-text-stroke-width:0.280px;">Предоставить доступ</span>
<svg style="left:960px;top:33px" width="9" height="5" viewBox="0 0 9 5"><path fill="#1a73e8" d="M0 0h8.400L4.200 4.400z"/></svg>
<div class="b" style="left:990px;top:17px;width:107px;height:36px;background:#1a73e8;border-radius:4px;"></div>
<svg style="left:1000px;top:23.500px" width="24" height="24" viewBox="0 0 24 24"><path fill="#fff" d="M12 6c3.790 0 7.170 2.130 8.820 5.500C19.170 14.870 15.790 17 12 17s-7.170-2.130-8.820-5.500C4.830 8.130 8.210 6 12 6m0-2C7 4 2.730 7.110 1 11.500 2.730 15.890 7 19 12 19s9.270-3.110 11-7.500C21.270 7.110 17 4 12 4zm0 5c1.380 0 2.500 1.120 2.500 2.500S13.380 14 12 14s-2.500-1.120-2.500-2.500S10.620 9 12 9m0-2c-2.480 0-4.500 2.020-4.500 4.500S9.520 16 12 16s4.500-2.020 4.500-4.500S14.480 7 12 7z"/></svg>
<span id="t102" class="t" style="left:1027.70px;top:28.00px;font-size:14px;line-height:14px;color:#fff;-webkit-text-stroke:0.400px #fff;letter-spacing:0.702px;">Открыть</span>
<div class="b" style="left:1113px;top:15px;width:40px;height:40px;border:2px solid #eeeeee;border-radius:50%;background:#fff;"></div>
<div class="b" style="left:1131px;top:26.6px;width:4px;height:4px;background:#1a73e8;border-radius:50%;"></div>
<div class="b" style="left:1131px;top:33px;width:4px;height:4px;background:#1a73e8;border-radius:50%;"></div>
<div class="b" style="left:1131px;top:39.4px;width:4px;height:4px;background:#1a73e8;border-radius:50%;"></div>
<div class="b" style="left:1169px;top:12px;width:1px;height:45px;background:#dadce0;"></div>
<svg style="left:1184px;top:22.500px" width="24" height="24" viewBox="0 0 24 24"><path fill="#5f6368" d="M11 18h2v-2h-2v2zm1-16C6.480 2 2 6.480 2 12s4.480 10 10 10 10-4.480 10-10S17.520 2 12 2zm0 18c-4.410 0-8-3.590-8-8s3.590-8 8-8 8 3.590 8 8-3.590 8-8 8zm0-14c-2.210 0-4 1.790-4 4h2c0-1.100.9-2 2-2s2 .9 2 2c0 2-3 1.750-3 5h2c0-2.250 3-2.500 3-5 0-2.210-1.790-4-4-4z"/></svg>
<svg style="left:1224px;top:19px" width="32" height="32" viewBox="0 0 32 32"><defs><clipPath id="av"><circle cx="16" cy="16" r="16"/></clipPath><filter id="bl" x="-10%" y="-10%" width="120%" height="120%"><feGaussianBlur stdDeviation="0.550"/></filter></defs>
<g clip-path="url(#av)"><g filter="url(#bl)"><rect x="-2" y="-2" width="36" height="36" fill="#e9e9ea"/>
<polygon points="-2,18 -2,-2 17,-2 9,13 4,19" fill="#4b4a4a"/><polygon points="12,-2 17,-2 10,12 8,10" fill="#7d6e6b"/>
<polygon points="-2,15 8,14 12,20 6,24 -2,22" fill="#b9bcbd"/><rect x="3" y="16" width="3.500" height="5" fill="#3d5a66"/>
<polygon points="-2,22 8,20 14,34 -2,34" fill="#8f8783"/><polygon points="8,20 13,19 22,34 13,34" fill="#4a4848"/><polygon points="13,24 23,24 34,34 20,34" fill="#d4d6da"/>
<rect x="20.700" y="0" width="1.300" height="15" fill="#9b9b9b"/><rect x="21" y="4.500" width="8" height="1" fill="#b5b5b5"/>
<rect x="22.500" y="12" width="6" height="12" fill="#b3b3b3"/><rect x="27.500" y="8" width="2" height="18" fill="#c9c9c9"/><rect x="23" y="14" width="5" height="2" fill="#444"/><rect x="23.800" y="16.400" width="2" height="2" fill="#e0452a"/>
<path d="M12.200 24V17c0-2.500 1.300-4.300 3-4.300h4.800c1.700 0 3 1.800 3 4.300v7z" fill="#dc2424"/>
<path d="M14.300 20.500l.8-7h5l.8 7z" fill="#9aa3ad"/><rect x="14" y="19.500" width="7.300" height="1.800" fill="#8b8f98"/>
<path d="M12.200 21.200h10.600v3.600H12.200z" fill="#ff5a12"/><rect x="16.300" y="21.900" width="3.600" height="2" fill="#1c2a48"/><rect x="12.500" y="24.800" width="10" height="1.300" fill="#3a3a3a"/>
</g></g></svg>
<div class="b" style="left:0px;top:67px;width:1280px;height:40.5px;background:#fff;box-shadow:0 1px 3px rgba(0,0,0,.55);"></div>
<svg style="left:0px;top:0px" width="70" height="110" viewBox="0 0 70 110"><g fill="none" stroke="#5f6368" stroke-width="2"><path d="M21.200 80.300L16.600 84.900l4.600 4.600"/><path d="M17 84.900H26.200a4.550 4.550 0 0 1 0 9.100H18.800"/></g>
<g fill="none" stroke="#c0c4c8" stroke-width="2"><path d="M57.300 80.300L61.900 84.900l-4.600 4.600"/><path d="M61.500 84.900H52.300a4.550 4.550 0 0 0 0 9.100H59.700"/></g></svg>
<div class="b" style="left:78px;top:77px;width:1px;height:24px;background:#dadce0;"></div>
<div class="b" style="left:125px;top:77px;width:1px;height:24px;background:#dadce0;"></div>
<div class="b" style="left:237px;top:77px;width:1px;height:24px;background:#dadce0;"></div>
<div class="b" style="left:408px;top:77px;width:1px;height:24px;background:#dadce0;"></div>
<div class="b" style="left:656px;top:77px;width:1px;height:24px;background:#dadce0;"></div>
<div class="b" style="left:925px;top:77px;width:1px;height:24px;background:#dadce0;"></div>
<div class="b" style="left:87px;top:72px;width:30px;height:30px;background:#d2e3fc;border-radius:2px;"></div>
<svg style="left:90px;top:75px" width="24" height="24" viewBox="0 0 24 24"><path fill="#5f6368" d="M7 4.200v15.600l4.300-4.100 2.700 6.100 2.600-1.200-2.700-6 5.800-.2z" transform="translate(2.300,2) scale(0.810)"/></svg>
<svg style="left:136px;top:76px" width="24" height="24" viewBox="0 0 24 24"><path fill="#5f6368" d="M13 11h-2v3H8v2h3v3h2v-3h3v-2h-3zm1-9H6c-1.100 0-2 .9-2 2v16c0 1.100.89 2 1.990 2H18c1.100 0 2-.9 2-2V8l-6-6zm4 18H6V4h7v5h5v11z"/></svg>
<span id="t103" class="t" style="left:164.50px;top:80.00px;font-size:14px;line-height:14px;color:#5f6368;letter-spacing:-0.107px;">Add page</span>
<svg style="left:0;top:0" width="460" height="110" viewBox="0 0 460 110"><g fill="none" stroke="#5f6368" stroke-width="2" stroke-linejoin="round">
<path d="M260 79H251V96.800H269V91H251M251 85H262.500"/><path d="M261.300 82.400H270M265.600 78V86.800" stroke-width="1.800"/>
<path d="M430 79.300H423.800a1.200 1.200 0 0 0-1.200 1.200V95.300a1.200 1.200 0 0 0 1.200 1.200H439a1.200 1.200 0 0 0 1.200-1.200V88"/><path d="M431.700 82.100H441M436.400 77.300V86.900" stroke-width="1.800"/>
<path d="M426.700 88V94M430.500 85.600V94M434.600 90.300V94" stroke-width="1.800"/></g>
<g fill="#5f6368"><rect x="252.800" y="81.100" width="1.700" height="1.700"/><rect x="252.800" y="87.200" width="1.700" height="1.700"/><rect x="252.800" y="93.200" width="1.700" height="1.700"/></g></svg>
<span id="t104" class="t" style="left:277.00px;top:80.00px;font-size:14px;line-height:14px;color:#5f6368;letter-spacing:0.171px;">Добавить данные</span>
<span id="t105" class="t" style="left:447.50px;top:80.00px;font-size:14px;line-height:14px;color:#5f6368;letter-spacing:0.204px;">Добавить диаграмму</span>
<svg style="left:593px;top:85px" width="8" height="4.2" viewBox="0 0 8 4.2"><path fill="#5f6368" d="M0 0h8L4.0 4.2z"/></svg>
<svg style="left:0;top:0" width="700" height="110" viewBox="0 0 700 110"><g fill="none" stroke="#5f6368" stroke-width="1.900" stroke-linejoin="round"><path d="M617.500 80.100L620.900 83.500 617.500 86.900 614.100 83.500z"/><rect x="614.500" y="90.900" width="5.700" height="5.200" rx=".6"/><rect x="624.600" y="90.900" width="5.700" height="5.200" rx=".6"/><path d="M622.800 83H631.300M627.100 78.800V87.400" stroke-width="1.800"/></g></svg>
<svg style="left:635px;top:85px" width="8" height="4.2" viewBox="0 0 8 4.2"><path fill="#5f6368" d="M0 0h8L4.0 4.2z"/></svg>
<div class="b" style="left:670px;top:82px;width:18px;height:2px;background:#5f6368;"></div>
<div class="b" style="left:673px;top:87px;width:12px;height:2px;background:#5f6368;"></div>
<div class="b" style="left:677px;top:92px;width:4px;height:2px;background:#5f6368;"></div>
<span id="t106" class="t" style="left:695.30px;top:80.00px;font-size:14px;line-height:14px;color:#5f6368;letter-spacing:0.109px;">Добавить элемент управления</span>
<svg style="left:904.5px;top:85px" width="8" height="4.2" viewBox="0 0 8 4.2"><path fill="#5f6368" d="M0 0h8L4.0 4.2z"/></svg>
<svg style="left:937px;top:76px" width="24" height="24" viewBox="0 0 24 24"><path fill="#5f6368" d="M9.400 16.600L4.800 12l4.600-4.600L8 6l-6 6 6 6 1.400-1.400zm5.200 0l4.600-4.600-4.600-4.600L16 6l6 6-6 6-1.400-1.400z" transform="translate(0.500,0) scale(0.960,1)"/></svg>
<svg style="left:968px;top:76px" width="24" height="24" viewBox="0 0 24 24"><path fill="#5f6368" d="M19 5v14H5V5h14m0-2H5c-1.100 0-2 .9-2 2v14c0 1.100.9 2 2 2h14c1.100 0 2-.9 2-2V5c0-1.100-.9-2-2-2zm-4.860 9.900l-2.600 3.200-1.740-2.060L6.400 17.140h11.400l-3.660-4.240z"/></svg>
<svg style="left:993.5px;top:85px" width="8" height="4.2" viewBox="0 0 8 4.2"><path fill="#5f6368" d="M0 0h8L4.0 4.2z"/></svg>
<svg style="left:1009px;top:76px" width="24" height="24" viewBox="0 0 24 24"><path fill="#5f6368" d="M3 3v4h1v10H3v4h4v-1h10v1h4v-4h-1V7h1V3h-4v1H7V3H3zm4 3h10v1h1v10h-1v1H7v-1H6V7h1V6zm4.200 2L8.200 16h1.700l.6-1.700h3l.6 1.700h1.700l-3-8h-1.600zm.8 2.200l1 2.800h-2l1-2.800z"/></svg>
<svg style="left:1040px;top:76px" width="24" height="24" viewBox="0 0 24 24"><g fill="#5f6368"><circle cx="5.500" cy="5.500" r="2.300"/><circle cx="18.500" cy="18.500" r="2.300"/></g><path d="M5.500 5.500l13 13" stroke="#5f6368" stroke-width="2.200"/></svg>
<svg style="left:1065px;top:85px" width="8" height="4.2" viewBox="0 0 8 4.2"><path fill="#5f6368" d="M0 0h8L4.0 4.2z"/></svg>
<svg style="left:1079px;top:76px" width="26" height="24" viewBox="0 0 26 24"><g fill="none" stroke="#5f6368" stroke-width="2"><circle cx="8.800" cy="9.300" r="5.800"/><path d="M16 10.200h6.200v10.400H10.200V16.800"/></g></svg>
<svg style="left:1105.5px;top:85px" width="8" height="4.2" viewBox="0 0 8 4.2"><path fill="#5f6368" d="M0 0h8L4.0 4.2z"/></svg>
<span id="t107" class="t" style="left:1126.70px;top:80.00px;font-size:14px;line-height:14px;color:#5f6368;letter-spacing:-0.452px;">Ещё</span>
<svg style="left:1158.4px;top:85px" width="8" height="4.2" viewBox="0 0 8 4.2"><path fill="#5f6368" d="M0 0h8L4.0 4.2z"/></svg>
</body></html>
